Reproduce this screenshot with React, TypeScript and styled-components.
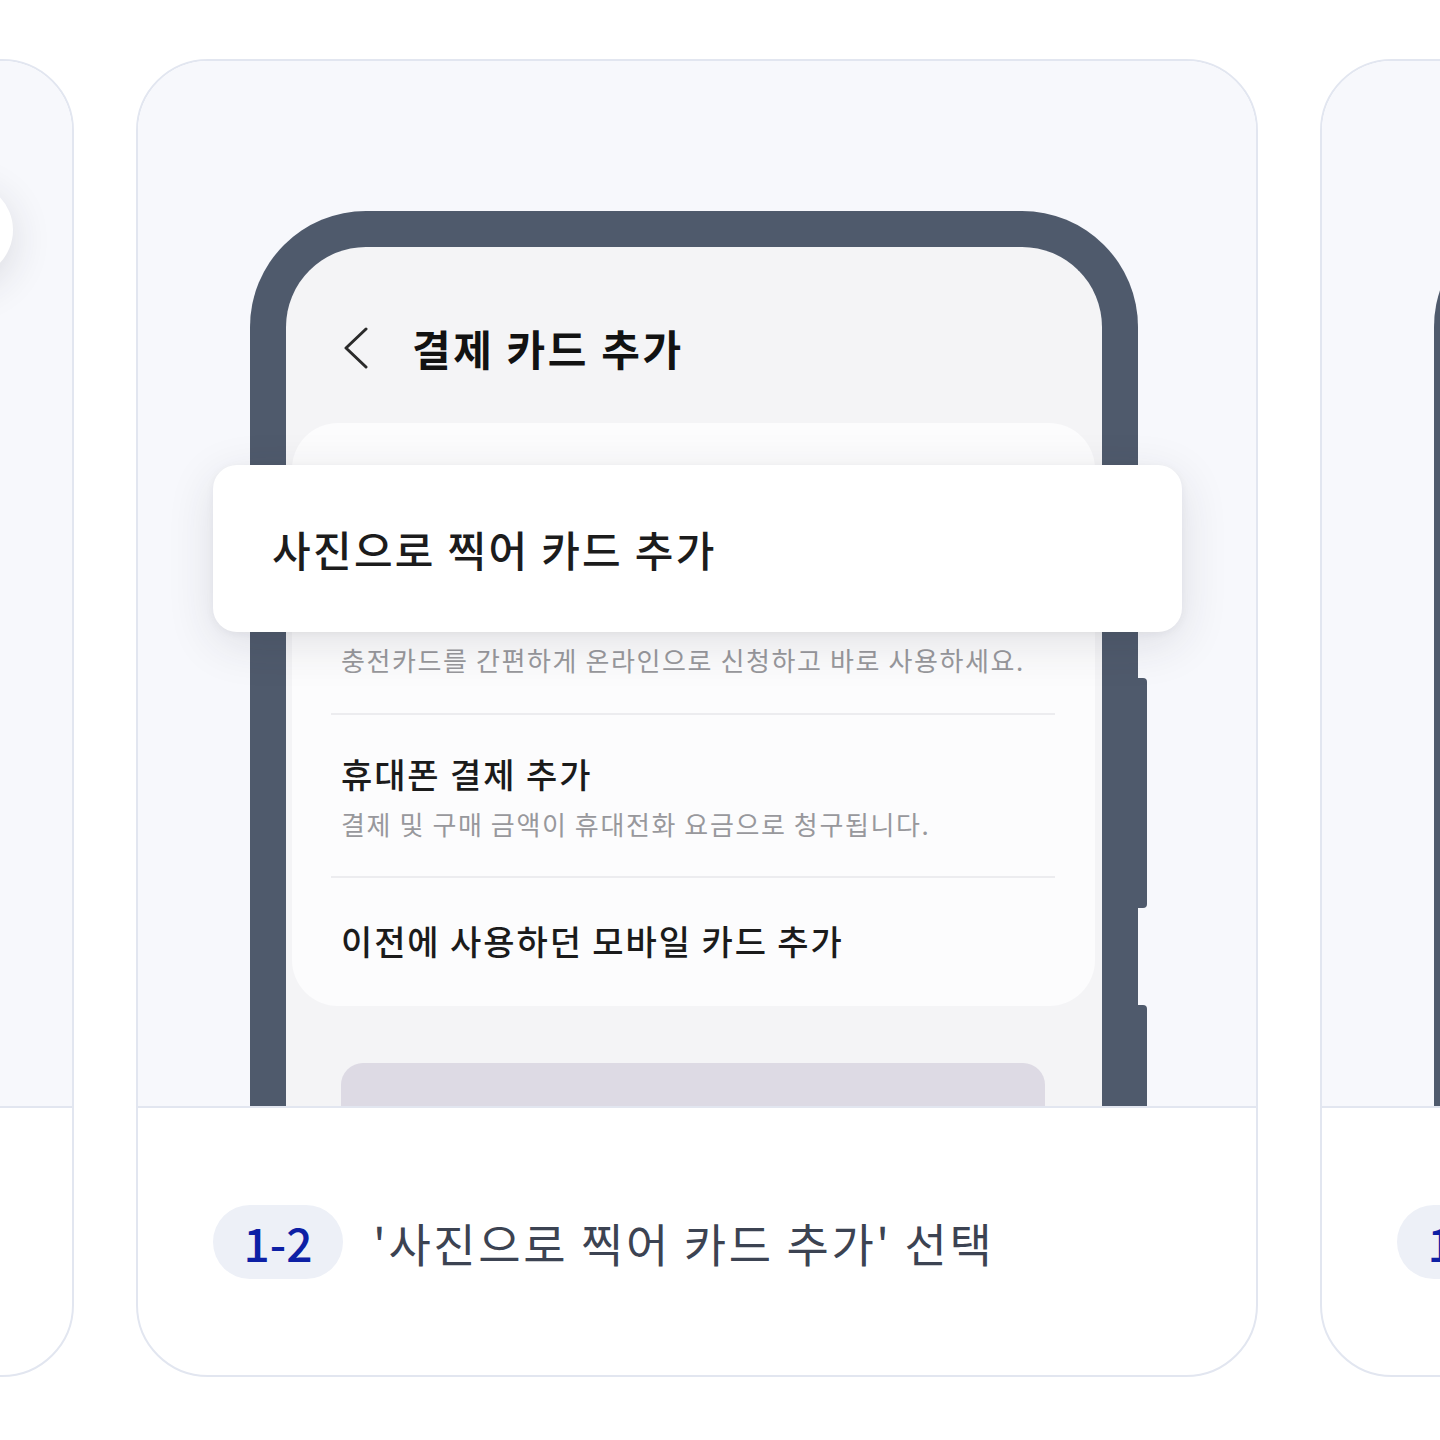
import React from "react";
import styled, { createGlobalStyle } from "styled-components";

const GlobalStyle = createGlobalStyle`
  html, body { margin: 0; padding: 0; background: #ffffff; }
  body { font-family: "Noto Sans CJK KR", "Noto Sans", sans-serif; }
  * { box-sizing: border-box; }
`;

const Viewport = styled.main`
  width: 1440px;
  height: 1440px;
  overflow: hidden;
  background: #ffffff;
  padding-top: 59px;
`;

const Track = styled.div`
  display: flex;
  gap: 62px;
  margin-left: -1048px;
  width: max-content;
`;

const Card = styled.article`
  width: 1122px;
  height: 1318px;
  flex-shrink: 0;
  border: 2px solid #e2e6f0;
  border-radius: 72px;
  overflow: hidden;
  display: flex;
  flex-direction: column;
  background: #ffffff;
`;

const Visual = styled.div`
  position: relative;
  height: 1047px;
  flex-shrink: 0;
  background: #f7f8fc;
  border-bottom: 2px solid #e2e6f0;
  overflow: hidden;
  padding: 150px 0 0 112px;
`;

const Phone = styled.div`
  position: relative;
  width: 888px;
  height: 1100px;
  border: 36px solid #4f5a6c;
  border-bottom: none;
  border-radius: 116px 116px 0 0;
  background: #f4f4f6;
  padding-top: 79px;
`;

const SideKey = styled.span<{ $top: number; $height: number }>`
  position: absolute;
  right: -45px;
  top: ${(p) => p.$top}px;
  width: 9px;
  height: ${(p) => p.$height}px;
  background: #4f5a6c;
  border-radius: 0 4px 4px 0;
`;

const Header = styled.header`
  display: flex;
  align-items: center;
  gap: 44px;
  height: 44px;
  padding-left: 57px;
`;

const Title = styled.h1`
  margin: 0;
  font-size: 42px;
  line-height: 44px;
  font-weight: 700;
  color: #121212;
  letter-spacing: 2.6px;
`;

const ListCard = styled.section`
  margin: 53px 7px 0 6px;
  background: #fcfcfd;
  border-radius: 46px;
  padding: 0 40px 0 39px;
  display: flex;
  flex-direction: column;
`;

const Row = styled.div<{ $pt: number; $pb: number }>`
  padding: ${(p) => p.$pt}px 10px ${(p) => p.$pb}px;
  display: flex;
  flex-direction: column;
  gap: 10px;
`;

const Divider = styled.hr`
  margin: 0;
  border: none;
  height: 2px;
  background: #ececef;
`;

const RowTitle = styled.div`
  font-size: 34px;
  line-height: 44px;
  font-weight: 500;
  color: #1b1b1b;
  letter-spacing: 1.9px;
`;

const RowSub = styled.div`
  font-size: 26px;
  line-height: 36px;
  color: #98989c;
  letter-spacing: 1.6px;
`;

const BottomBlock = styled.div`
  margin: 57px 57px 0 55px;
  height: 200px;
  background: #dddae4;
  border-radius: 22px;
`;

const Popup = styled.div`
  position: absolute;
  left: -73px;
  top: 218px;
  width: 969px;
  height: 167px;
  background: #ffffff;
  border-radius: 24px;
  box-shadow: 0 12px 48px rgba(40, 44, 60, 0.12), 0 2px 8px rgba(40, 44, 60, 0.05);
  display: flex;
  align-items: center;
  padding-left: 59px;
  font-size: 42px;
  font-weight: 500;
  color: #1c1c1c;
  letter-spacing: 2.3px;
`;

const Bubble = styled.div`
  position: absolute;
  left: 963px;
  top: 121px;
  width: 96px;
  height: 96px;
  border-radius: 50%;
  background: #ffffff;
  box-shadow: 0 10px 40px rgba(40, 44, 60, 0.14);
`;

const Caption = styled.div`
  flex: 1;
  display: flex;
  align-items: center;
  gap: 30px;
  padding-left: 75px;
`;

const StepBadge = styled.span`
  display: inline-flex;
  align-items: center;
  justify-content: center;
  width: 130px;
  height: 74px;
  border-radius: 37px;
  background: #edf0f7;
  color: #0d20a5;
  font-size: 46px;
  font-weight: 500;
  letter-spacing: 0;
`;

const CaptionText = styled.span`
  font-size: 46px;
  font-weight: 400;
  color: #3c4352;
  letter-spacing: 2.6px;
`;

const Chevron = () => (
  <svg width="25" height="42" viewBox="0 0 25 42" fill="none">
    <polyline
      points="23,2 3,21 23,40"
      stroke="#2a2a2a"
      strokeWidth="3"
      strokeLinecap="round"
      strokeLinejoin="round"
    />
  </svg>
);

const PhoneScreen: React.FC<{ withPopup?: boolean; bare?: boolean }> = ({
  withPopup,
  bare,
}) => (
  <Phone>
    <SideKey $top={431} $height={230} />
    <SideKey $top={758} $height={260} />
    {!bare && (
      <>
        <Header>
          <Chevron />
          <Title>결제 카드 추가</Title>
        </Header>
        <ListCard>
          <Row $pt={219} $pb={35}>
            <RowSub>충전카드를 간편하게 온라인으로 신청하고 바로 사용하세요.</RowSub>
          </Row>
          <Divider />
          <Row $pt={37} $pb={34}>
            <RowTitle>휴대폰 결제 추가</RowTitle>
            <RowSub>결제 및 구매 금액이 휴대전화 요금으로 청구됩니다.</RowSub>
          </Row>
          <Divider />
          <Row $pt={41} $pb={43}>
            <RowTitle>이전에 사용하던 모바일 카드 추가</RowTitle>
          </Row>
        </ListCard>
        <BottomBlock />
      </>
    )}
    {withPopup && <Popup>사진으로 찍어 카드 추가</Popup>}
  </Phone>
);

const StepCard: React.FC<{
  step: string;
  text: string;
  popup?: boolean;
  bubble?: boolean;
  bare?: boolean;
  noPhone?: boolean;
}> = ({ step, text, popup, bubble, bare, noPhone }) => (
  <Card>
    <Visual>
      {!noPhone && <PhoneScreen withPopup={popup} bare={bare} />}
      {bubble && <Bubble />}
    </Visual>
    <Caption>
      <StepBadge>{step}</StepBadge>
      <CaptionText>{text}</CaptionText>
    </Caption>
  </Card>
);

export default function App() {
  return (
    <>
      <GlobalStyle />
      <Viewport>
        <Track>
          <StepCard step="1-1" text="'결제 카드 추가' 선택" bubble noPhone />
          <StepCard step="1-2" text="'사진으로 찍어 카드 추가' 선택" popup />
          <StepCard step="1-3" text="카드 촬영" bare />
        </Track>
      </Viewport>
    </>
  );
}
